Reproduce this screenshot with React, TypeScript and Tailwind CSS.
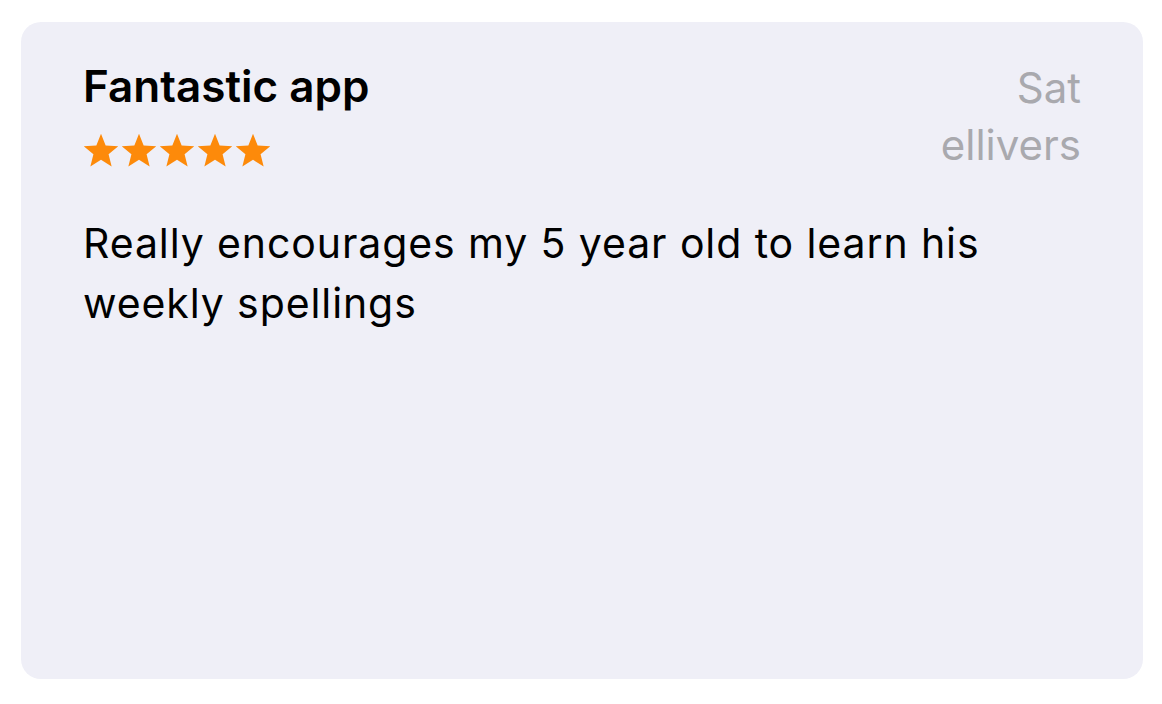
import React from 'react';

function Star() {
  return (
    <svg width="36" height="35" viewBox="0 0 24 23" className="shrink-0">
      <path
        d="M12 0.4l3.1 7.7 8.4 0.6-6.45 5.3 2.05 8.1L12 17.7l-7.1 4.4 2.05-8.1L0.5 8.7l8.4-0.6z"
        fill="#fd8a0a"
      />
    </svg>
  );
}

export default function App() {
  return (
    <div
      className="w-[1162px] h-[704px] bg-white pt-[22px] pl-[21px]"
      style={{ fontFamily: 'Inter, "Noto Sans", sans-serif' }}
    >
      <div className="w-[1122px] h-[657px] rounded-[20px] bg-[#efeff7] px-[62px] pt-[36px]">
        <div className="flex items-start justify-between">
          <div className="flex flex-col">
            <h2 className="text-[44px] leading-[57px] font-semibold text-black tracking-[0px]">
              Fantastic app
            </h2>
            <div className="flex gap-[2px] mt-[18px]">
              <Star />
              <Star />
              <Star />
              <Star />
              <Star />
            </div>
          </div>
          <div className="flex flex-col items-end text-[42px] leading-[57px] text-[#a9a9ae] mt-px">
            <span>Sat</span>
            <span>ellivers</span>
          </div>
        </div>
        <p className="mt-[40px] text-[41px] leading-[60px] text-black tracking-[0.9px] w-[980px]">
          Really encourages my 5 year old to learn his weekly spellings
        </p>
      </div>
    </div>
  );
}
